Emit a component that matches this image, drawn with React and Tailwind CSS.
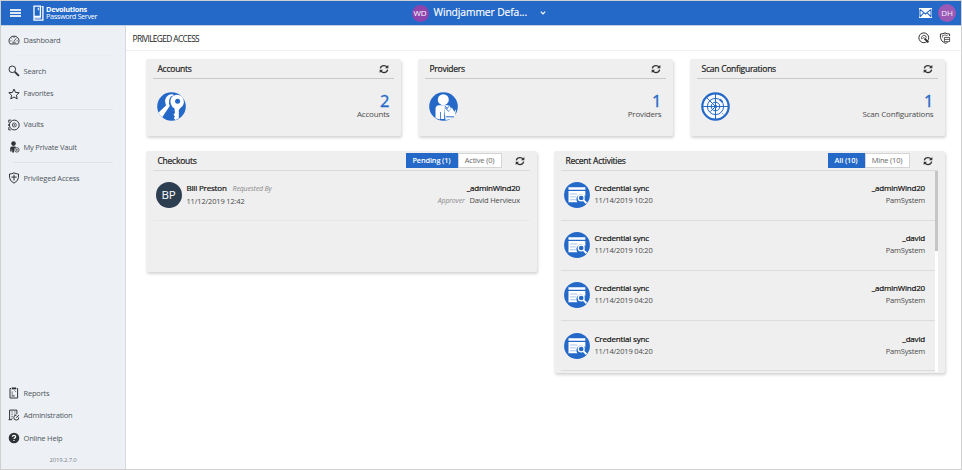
import clsx from 'clsx';

// ── Data ─────────────────────────────────────────────────────────────────────
const NAV_GROUPS = [
  [{ icon: 'dashboard', label: 'Dashboard' }],
  [
    { icon: 'search', label: 'Search' },
    { icon: 'star', label: 'Favorites' },
  ],
  [
    { icon: 'vault', label: 'Vaults' },
    { icon: 'privateVault', label: 'My Private Vault' },
  ],
  [{ icon: 'shield', label: 'Privileged Access' }],
];

const NAV_BOTTOM = [
  { icon: 'reports', label: 'Reports' },
  { icon: 'admin', label: 'Administration' },
  { icon: 'help', label: 'Online Help' },
];

const STATS = [
  { title: 'Accounts', value: 2, icon: 'accounts' },
  { title: 'Providers', value: 1, icon: 'providers' },
  { title: 'Scan Configurations', value: 1, icon: 'radar' },
];

const ACTIVITIES = [
  { date: '11/14/2019 10:20', account: '_adminWind20' },
  { date: '11/14/2019 10:20', account: '_david' },
  { date: '11/14/2019 04:20', account: '_adminWind20' },
  { date: '11/14/2019 04:20', account: '_david' },
];

// ── Icons ────────────────────────────────────────────────────────────────────
const line = { fill: 'none', stroke: 'currentColor', strokeWidth: 1 };

const ICONS = {
  dashboard: (
    <g {...line}>
      <path d="M2.3 10A5 4.7 0 1 1 9.7 10Q9 10.6 8.3 9.9H3.7Q3 10.6 2.3 10Z" />
      <path d="M2.4 6.8h1.2M3.5 4.2l.7.6M6 3v1M8.5 6.8h1.1M5.9 7.2l2.4-3M4.3 8.2h3.4" strokeWidth=".8" />
    </g>
  ),
  search: (
    <g {...line}>
      <circle cx="4.3" cy="4.3" r="3.3" />
      <path d="M6.8 6.8 10.9 10.9" strokeWidth="1.9" />
    </g>
  ),
  star: <path {...line} d="m6 1 1.5 3.4 3.7.3-2.8 2.5.8 3.7L6 9 2.8 10.9l.8-3.7L.8 4.7l3.7-.3Z" />,
  vault: (
    <g {...line}>
      <circle cx="6.3" cy="6" r="4.9" />
      <circle cx="6.3" cy="6" r="2" strokeWidth=".8" />
      <circle cx="6.3" cy="6" r=".8" fill="currentColor" stroke="none" />
      <path d="M2.8 1.1H.8v2.6M.8 8.2v2.7h2M.8 5v2" />
    </g>
  ),
  privateVault: (
    <g>
      <circle cx="5.5" cy="2.6" r="2.3" fill="currentColor" />
      <path d="M2.2 10.6V7.2Q2.2 5.5 4 5.5h2.8Q8.2 5.6 8.2 6.2 6 6.8 6 9v2.4H4.2V8.4H3.7v2.2Z" fill="currentColor" />
      <circle cx="8.9" cy="8.9" r="2.2" {...line} strokeWidth=".8" />
      <circle cx="8.9" cy="8.9" r=".8" fill="currentColor" />
    </g>
  ),
  shield: (
    <g {...line}>
      <path d="M6 .8Q8 2 10.5 2v3.4Q10.3 8.9 6 11.2 1.7 8.9 1.5 5.4V2Q4 2 6 .8Z" />
      <path d="M6 2.7v5.8M3.3 5.1h5.4" />
    </g>
  ),
  reports: (
    <g {...line}>
      <path d="M3 1.5H2v9.5h7.6V1.5h-.9" />
      <path d="M3.7 1.4h4.4" strokeWidth="1.9" />
      <path d="M3.6 5.1h1.1M3.6 7h1.1M3.6 8.9h3.1M6.6 3.6l1 1" />
    </g>
  ),
  admin: (
    <g {...line}>
      <path d="M.6 10.7h3.5M1.6 10.6V1.1h7.3v4" />
      <path d="M3.6 3h1M6.4 3h1M3.6 5.2h1M6.4 5.2h1M3.6 7.4h1M3.6 9.2h1" />
      <path d="M10.8 8.4A2.5 2.5 0 1 1 8.6 6.1M8.2 8.7 11 6.2" />
    </g>
  ),
  help: (
    <g>
      <circle cx="6" cy="6" r="5.3" fill="currentColor" />
      <path d="M4.3 4.8Q4.4 3.3 6 3.3T7.7 4.7Q7.7 5.5 6.8 5.9 6 6.2 6 7.1M6 8v1.1" fill="none" stroke="#fff" strokeWidth="1.2" />
    </g>
  ),
  scan: (
    <g {...line}>
      <circle cx="5.8" cy="5.8" r="4.9" />
      <path d="M3.6 7.2Q2.8 3.8 5.9 3.2 8.6 3.4 8.2 6M4.6 6.8 6.3 5" strokeWidth=".8" />
      <path d="m6.5 6.5 3.9 3.9" strokeWidth="1.9" />
    </g>
  ),
  shieldCard: (
    <g {...line}>
      <path d="M10.6 4V2Q8 2 6 .9 4 2 1.4 2v3.5Q1.6 9.2 6.2 11.3 8 10.9 8.6 10.3" />
      <path d="M3.4 5.6V3.7L6 2.9l2.6.8" strokeWidth=".7" />
      <path d="M5.4 5.4h5.2v4.2H5.4ZM5.4 7.4h5.2" strokeWidth=".8" />
    </g>
  ),
  refresh: (
    <g fill="none" stroke="currentColor" strokeWidth="1.5">
      <path d="M1.6 5.2Q2.3 1.8 6 1.8q2.4 0 3.7 1.9M10.4 6.8Q9.7 10.2 6 10.2 3.6 10.2 2.3 8.3" />
      <path d="M11.2 1.2v4H7.2ZM.8 10.8v-4h4Z" fill="currentColor" stroke="none" />
    </g>
  ),
};

function Icon({ name, className = 'size-3' }) {
  return (
    <svg viewBox="0 0 12 12" className={clsx('shrink-0', className)}>
      {ICONS[name]}
    </svg>
  );
}

function Logo() {
  return (
    <svg viewBox="0 0 11 16" className="h-4 w-[11px] shrink-0" fill="none" stroke="#fff">
      <path d="M1 1.1h6.4v10.4H1Z" strokeWidth="1.3" />
      <path d="M8.6 1.7h1.3v13.5H1v-2.4h6.9" strokeWidth="1.3" />
      <path d="M5.3 2.8v2.4" strokeWidth="1.1" />
    </svg>
  );
}

const BADGES = {
  accounts: (
    <>
      <circle cx="14.5" cy="14.5" r="14.3" fill="#2468c8" />
      <path d="M1.5 20.5 9 13.5Q6.5 6.5 11 3.4 14.5 1.2 17.2 3 11.6 5.2 12 11.2L12.7 14 5.2 25.2Q2.8 23.2 1.5 20.5Z" fill="#fff" />
      <path d="M20.2 2.8a7 7 0 0 1 3.4 12.9L21.8 18v8.3L18.6 28l-1.8-1.6 1.1-2-1.4-1.7 1.5-2-.6-4.4A7 7 0 0 1 20.2 2.8Z" fill="#fff" />
      <circle cx="20.6" cy="9.2" r="2.5" fill="#2468c8" />
      <path d="M14.4 4.2Q11.2 8.8 14.8 14.8" fill="none" stroke="#2468c8" strokeWidth=".9" />
    </>
  ),
  providers: (
    <>
      <circle cx="14.5" cy="14.5" r="14.3" fill="#2468c8" />
      <circle cx="14.3" cy="7.7" r="5.5" fill="#fff" />
      <path d="M6.5 26V16.5Q6.8 13.4 10 13.2H18.5q3 .3 3.3 3.5l-2 2.2-4-4-.6 8v4H11.8V20H11v7.5Z" fill="#fff" />
      <path d="m15.4 15.6 4.2 4.1 3.2-4.1 2.6 4.1 1.7-2.6-1 6.4q-3.5 4.3-9.6 4.4Z" fill="#fff" />
      <path d="m16.2 14.2 1.9 2.4 1.6-2.2M17 24.8h8" stroke="#2468c8" strokeWidth="1" fill="none" />
    </>
  ),
  radar: (
    <g fill="none" stroke="#2468c8">
      <circle cx="14.5" cy="14.5" r="13.2" strokeWidth="2.2" fill="#f8fafd" />
      <circle cx="14.5" cy="14.5" r="8.1" />
      <circle cx="14.5" cy="14.5" r="4.3" />
      <circle cx="14.5" cy="14.5" r="1.2" fill="#2468c8" />
      <path d="M14.5 1v27M1 14.5h27M6 6l8.5 8.5" />
      <path d="M14.5 14.5 9.4 19.6M21.4 21.4l.9.9" />
      <path d="M18.7 7.6q2 .9 2.6 2.6" strokeWidth="1.8" />
    </g>
  ),
  sync: (
    <>
      <circle cx="14.5" cy="14.5" r="14.4" fill="#2468c8" />
      <path d="M5 5.9h18.8v2.8H5ZM5 10h18.8v6a5 5 0 0 0-8.9 6.6H5Z" fill="#fff" />
      <path d="M6.8 13.4h8M6.8 16.6h6.4M6.8 19.8h6.4" stroke="#9dbce8" strokeWidth="1" />
      <circle cx="19.2" cy="17.8" r="3.3" fill="#2468c8" stroke="#fff" strokeWidth="1.4" />
      <path d="m21.6 20.2 3.5 3.5" stroke="#fff" strokeWidth="2" />
    </>
  ),
};

function Badge({ name, className }) {
  return (
    <svg viewBox="0 0 29 29" className={clsx('shrink-0', className)}>
      {BADGES[name]}
    </svg>
  );
}

// ── Layout pieces ────────────────────────────────────────────────────────────
function NavItem({ icon, label }) {
  return (
    <a className="flex h-[22.5px] items-center gap-1 pl-[6.5px] text-[7.5px] tracking-[-0.2px] text-[#4f555b]">
      <Icon name={icon} className="size-3 text-[#303336]" />
      <span className="pt-px">{label}</span>
    </a>
  );
}

function Sidebar() {
  return (
    <nav className="flex w-[125px] shrink-0 flex-col border-r border-[#d5d8dc] bg-[#edf1f6] pt-[2.75px]">
      {NAV_GROUPS.map((group, i) => (
        <div key={i}>
          {i > 0 && (
            <div className="flex h-[8.5px] items-center px-3">
              <div className={clsx('h-px w-full', i === 1 ? 'bg-[#eaeef2]' : 'bg-[#e0e4e9]')} />
            </div>
          )}
          {group.map((item) => <NavItem key={item.label} {...item} />)}
        </div>
      ))}
      <div className="mt-auto">
        {NAV_BOTTOM.map((item) => <NavItem key={item.label} {...item} />)}
        <div className="flex h-5 items-center justify-center pt-[2px] text-[6px] tracking-[-0.15px] text-[#7b8086]">2019.2.7.0</div>
      </div>
    </nav>
  );
}

function Header() {
  return (
    <header className="flex h-[25px] shrink-0 items-center border-b border-[#c3cfdf] bg-[#2468c8] text-white">
      <div className="flex w-[410.5px] items-center pl-[8.5px]">
        <div className="flex w-[11px] flex-col gap-[1.5px]">
          <div className="h-[1.5px] bg-white/85" />
          <div className="h-[1.5px] bg-white/85" />
          <div className="h-[1.5px] bg-white/85" />
        </div>
        <div className="ml-3 flex items-center gap-[2.5px]">
          <Logo />
          <div className="text-[7.4px] leading-[7px] tracking-[-0.32px]">
            <div className="font-bold">Devolutions</div>
            <div className="tracking-[-0.42px]">Password Server</div>
          </div>
        </div>
      </div>
      <div className="flex size-[17px] items-center justify-center rounded-full bg-[#8e44ad] text-[8px] tracking-[-0.2px]">WD</div>
      <div className="ml-[5px] text-[10.3px] tracking-[-0.1px] [-webkit-text-stroke:0.15px]">Windjammer Defa...</div>
      <svg viewBox="0 0 6 4" className="ml-[13px] h-1 w-1.5" fill="none" stroke="#fff" strokeWidth="1.2"><path d="m.8.6 2.2 2.2L5.2.6" /></svg>
      <svg viewBox="0 0 13 10" className="ml-auto h-2.5 w-[13px]">
        <path d="M0 0h13v10H0Z" fill="#fff" />
        <path d="M1 1.4 6.5 6 12 1.4M1 8.8l3.8-4M12 8.8 8.2 4.8M1 1.4v7.4M12 1.4v7.4" fill="none" stroke="#2468c8" strokeWidth="1.1" />
      </svg>
      <div className="mr-[5px] ml-[6px] flex size-[18px] items-center justify-center rounded-full bg-[#9b59b6] text-[8px] tracking-[-0.2px] text-white/90">DH</div>
    </header>
  );
}

function Card({ title, actions, className, lineColor, children }) {
  return (
    <section className={clsx('flex flex-col rounded-[2px] bg-[#efefef] px-[7px] shadow-[1px_2px_3px_rgba(0,0,0,0.17)]', className)}>
      <div className={clsx('flex h-5 shrink-0 items-center border-b pt-px pr-[5.5px] pl-[5px]', lineColor)}>
        <h2 className="mr-auto pt-px text-[8.5px] tracking-[-0.25px] text-[#1c1c1c] [-webkit-text-stroke:0.2px]">{title}</h2>
        {actions}
        <Icon name="refresh" className="size-2.5 text-[#333]" />
      </div>
      {children}
    </section>
  );
}

function Toggle({ options }) {
  return (
    <div className="mr-[13px] flex h-[15px] text-[7.4px] tracking-[-0.15px]">
      {options.map(({ label, width }, i) => (
        <button
          key={label}
          className={clsx('flex items-center justify-center border pt-px', width,
            i === 0 ? 'border-[#2468c8] bg-[#2468c8] font-semibold text-white' : 'border-[#d4d4d4] bg-white text-[#666]')}
        >
          {label}
        </button>
      ))}
    </div>
  );
}

function Row({ badge, title, titleNote, sub, account, right, rightNote, className }) {
  return (
    <div className={clsx('flex h-[50.2px] shrink-0 items-center border-b pr-2.5 pl-[3px] text-[7.5px] leading-3 tracking-[-0.18px] text-[#4c4c4c]', className)}>
      {badge}
      <div className="mb-[2px] ml-[5px] flex-1">
        <div>
          <span className="text-[8px] text-[#111] [-webkit-text-stroke:0.2px]">{title}</span>
          {titleNote && <i className="ml-[6px] text-[7px] text-[#8c8c8c]">{titleNote}</i>}
        </div>
        <div>{sub}</div>
      </div>
      <div className="mb-[2px] text-right">
        <div className="text-[8px] text-[#111] [-webkit-text-stroke:0.2px]">{account}</div>
        <div>{rightNote && <i className="mr-[5px] text-[7px] text-[#8c8c8c]">{rightNote}</i>}{right}</div>
      </div>
    </div>
  );
}

export default function App() {
  return (
    <div className="flex h-[470px] w-[962px] flex-col overflow-hidden border border-[#d0d0d0] bg-white font-['Open_Sans','Noto_Sans',sans-serif]">
      <Header />
      <div className="flex min-h-0 flex-1">
        <Sidebar />
        <main className="flex-1">
          <div className="flex h-[25px] items-center border-b border-[#f0f0f0] pr-2.5 pl-[6.5px]">
            <h1 className="mr-auto pt-[2px] text-[8.4px] tracking-[-0.65px] text-[#222]">PRIVILEGED ACCESS</h1>
            <Icon name="scan" className="size-3 text-[#333]" />
            <Icon name="shieldCard" className="ml-[9px] size-3 text-[#333]" />
          </div>

          <div className="pt-[7.5px] pr-4 pl-[19.5px]">
            <div className="grid grid-cols-3 gap-[16.5px]">
              {STATS.map(({ title, value, icon }) => (
                <Card key={title} title={title} lineColor="border-[#c8c8c8]" className="h-[77px]">
                  <div className="flex flex-1 items-center justify-between px-[4.5px] pb-[2px]">
                    <Badge name={icon} className="size-[29px]" />
                    <div className="pt-px text-right">
                      <div className="text-[16.5px] leading-[15px] text-[#2468c8] [-webkit-text-stroke:0.35px]">{value}</div>
                      <div className="text-[8px] leading-3 tracking-[-0.18px] text-[#4c4c4c]">{title}</div>
                    </div>
                  </div>
                </Card>
              ))}
            </div>

            <div className="mt-[15px] grid grid-cols-2 items-start gap-[16.5px]">
              <Card
                title="Checkouts"
                lineColor="border-[#d9d9d9]"
                className="h-[121px]"
                actions={<Toggle options={[{ label: 'Pending (1)', width: 'w-[52px]' }, { label: 'Active (0)', width: 'w-11' }]} />}
              >
                <Row
                  className="border-[#e8e8e8]"
                  badge={<div className="flex size-[26px] items-center justify-center rounded-full bg-[#2c3e50] text-[11.5px] text-white">BP</div>}
                  title="Bill Preston"
                  titleNote="Requested By"
                  sub="11/12/2019 12:42"
                  account="_adminWind20"
                  rightNote="Approver"
                  right="David Hervieux"
                />
              </Card>

              <Card
                title="Recent Activities"
                lineColor="border-[#d9d9d9]"
                className="h-[222px]"
                actions={<Toggle options={[{ label: 'All (10)', width: 'w-[37px]' }, { label: 'Mine (10)', width: 'w-[45px]' }]} />}
              >
                <div className="flex h-[201px]">
                  <div className="flex-1">
                    {ACTIVITIES.map(({ date, account }, i) => (
                      <Row
                        key={i}
                        className="border-[#dcdcdc]"
                        badge={<Badge name="sync" className="size-[26px]" />}
                        title="Credential sync"
                        sub={date}
                        account={account}
                        right="PamSystem"
                      />
                    ))}
                  </div>
                  <div className="w-[3px] bg-white"><div className="h-20 bg-[#c6c6c6]" /></div>
                </div>
              </Card>
            </div>
          </div>
        </main>
      </div>
    </div>
  );
}
